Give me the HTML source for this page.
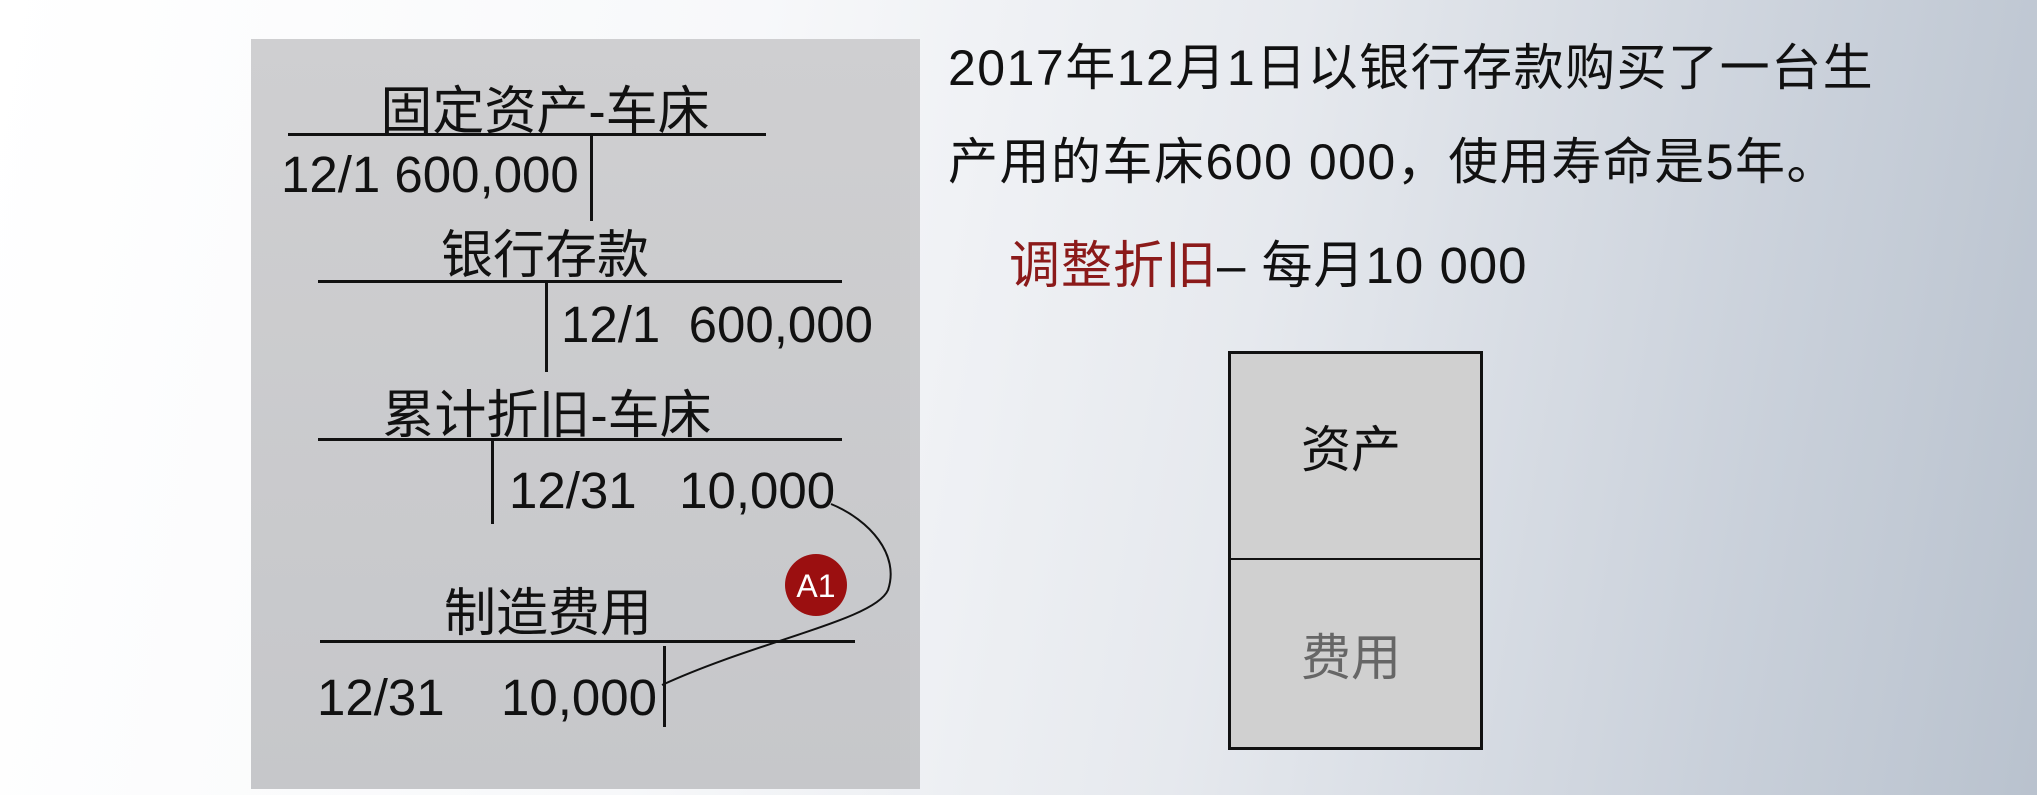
<!DOCTYPE html>
<html><head><meta charset="utf-8"><style>
body{margin:0;width:2037px;height:795px;overflow:hidden;position:relative;
background:linear-gradient(100deg,#ffffff 0%,#f7f8fa 35%,#e6e9ee 60%,#c9d0da 85%,#b9c2ce 100%);
font-family:"Liberation Sans","Noto Sans CJK SC",sans-serif;color:#111}
.p{position:absolute;white-space:pre;line-height:60px}
.c{transform:translateX(-50%)}
.panel{position:absolute;left:251px;top:39px;width:669px;height:750px;background:linear-gradient(180deg,#cfcfd1,#c6c7ca)}
.h{position:absolute;height:3px;background:#111}
.v{position:absolute;width:3px;background:#111}
</style></head><body>
<div class="panel"></div>
<div class="p c" style="left:545px;top:82px;font-size:52px">固定资产-车床</div>
<div class="h" style="left:288px;top:133px;width:478px"></div>
<div class="v" style="left:590px;top:134px;height:87px"></div>
<div class="p" style="left:281px;top:145px;font-size:51px">12/1 600,000</div>
<div class="p c" style="left:545px;top:226px;font-size:52px">银行存款</div>
<div class="h" style="left:318px;top:280px;width:524px"></div>
<div class="v" style="left:545px;top:281px;height:91px"></div>
<div class="p" style="left:561px;top:295px;font-size:51px">12/1  600,000</div>
<div class="p c" style="left:547px;top:386px;font-size:52px">累计折旧-车床</div>
<div class="h" style="left:318px;top:438px;width:524px"></div>
<div class="v" style="left:491px;top:439px;height:85px"></div>
<div class="p" style="left:509px;top:461px;font-size:51px">12/31   10,000</div>
<div class="p c" style="left:548px;top:584px;font-size:52px">制造费用</div>
<div class="h" style="left:320px;top:640px;width:535px"></div>
<div class="v" style="left:663px;top:646px;height:81px"></div>
<div class="p" style="left:317px;top:668px;font-size:51px">12/31</div>
<div class="p" style="left:501px;top:668px;font-size:51px">10,000</div>
<svg style="position:absolute;left:0;top:0" width="2037" height="795">
<path d="M831 504 C870 520 900 555 888 590 C875 620 760 640 662 685" fill="none" stroke="#111" stroke-width="2"/>
<circle cx="816" cy="585" r="31" fill="#9b0f10"/>
<text x="816" y="597" font-size="32" fill="#fff" text-anchor="middle" font-family="Liberation Sans">A1</text>
<line x1="1351" y1="504" x2="1351" y2="590" stroke="#9b1010" stroke-width="2"/>
<path d="M1344 588 L1358 588 L1351 602 Z" fill="#9b1010"/>
</svg>
<div class="p" style="left:948px;top:38px;font-size:50px;letter-spacing:1.5px">2017年12月1日以银行存款购买了一台生</div>
<div class="p" style="left:948px;top:132px;font-size:50px;letter-spacing:1.5px">产用的车床600 000，使用寿命是5年。</div>
<div class="p" style="left:1009px;top:236px;font-size:51px;letter-spacing:1px"><span style="color:#8b1a1a">调整折旧</span>– 每月10 000</div>
<div style="position:absolute;left:1228px;top:351px;width:249px;height:393px;border:3px solid #111;background:#d0d0d0"></div>
<div class="h" style="left:1228px;top:558px;width:255px;height:2px"></div>
<div class="p c" style="left:1351px;top:420px;font-size:50px">资产</div>
<div class="p c" style="left:1351px;top:628px;font-size:50px;color:#666">费用</div>
</body></html>
